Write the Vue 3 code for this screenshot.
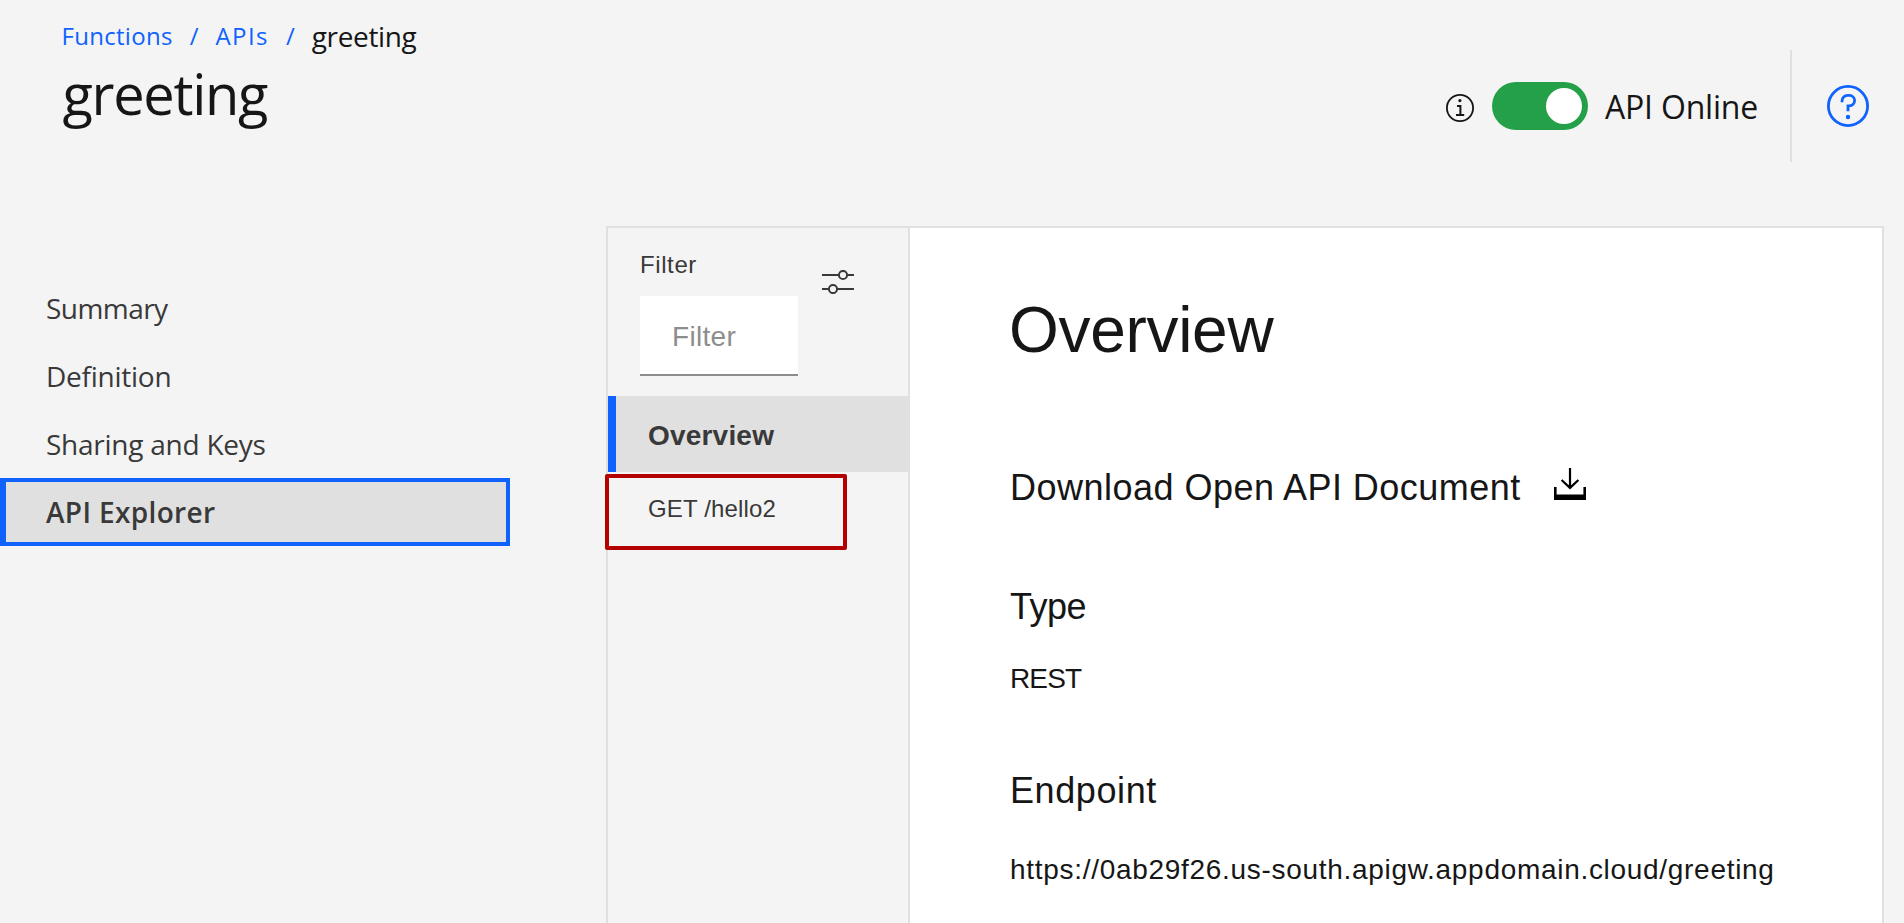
<script setup>
import { ref } from 'vue'

const online = ref(true)
const filter = ref('')
const navItems = [
  { label: 'Summary', cls: 'summary' },
  { label: 'Definition', cls: 'definition' },
  { label: 'Sharing and Keys', cls: 'sharing' },
  { label: 'API Explorer', cls: 'active' },
]
</script>

<template>
  <div class="page">
    <header class="header">
      <div class="heading">
        <nav class="crumbs">
          <a class="crumb">Functions</a>
          <span class="slash">/</span>
          <a class="crumb apis">APIs</a>
          <span class="slash">/</span>
          <span class="current">greeting</span>
        </nav>
        <h1 class="title">greeting</h1>
      </div>
      <div class="actions">
        <svg class="info" viewBox="0 0 28 28" fill="none">
          <circle cx="14" cy="14" r="13.1" stroke="#161616" stroke-width="1.8" />
          <circle cx="13.9" cy="6.6" r="1.6" fill="#161616" />
          <path d="M11 12h3.4v9M10 21.1h8.2" stroke="#161616" stroke-width="2" />
        </svg>
        <button class="toggle" :class="{ on: online }" @click="online = !online"><i class="knob"></i></button>
        <span class="status">API Online</span>
        <span class="divider"></span>
        <svg class="help" viewBox="0 0 42 42" fill="none" stroke="#0f62fe" stroke-width="2.8">
          <circle cx="21" cy="21" r="19.6" />
          <path d="M15 17.2V16.2A5.7 5.7 0 0 1 20.7 10.4H22.4A5.2 5.2 0 0 1 22.4 20.8H21V26.2" />
          <circle cx="21" cy="32" r="2.2" fill="#0f62fe" stroke="none" />
        </svg>
      </div>
    </header>

    <main class="main">
      <nav class="side">
        <a v-for="item in navItems" :key="item.label" class="side-item" :class="item.cls">{{ item.label }}</a>
      </nav>

      <section class="panel">
        <aside class="ops">
          <div class="filter-row">
            <label class="filter">
              <span class="filter-label">Filter</span>
              <input v-model="filter" class="filter-input" placeholder="Filter" />
            </label>
            <svg class="sliders" viewBox="0 0 32 24" fill="none" stroke="#393939" stroke-width="2">
              <path d="M0 5h16.5M25.5 5H32M0 19h6.5M15.5 19H32" />
              <circle cx="21" cy="5" r="4.1" />
              <circle cx="11" cy="19" r="4.1" />
            </svg>
          </div>
          <a class="op selected">Overview</a>
          <a class="op get">GET /hello2<span class="highlight"></span></a>
        </aside>
        <article class="content">
          <h2 class="overview">Overview</h2>
          <div class="download">
            <h3 class="sub">Download Open API Document</h3>
            <svg class="download-icon" viewBox="0 0 32 32" fill="none" stroke="#000">
              <path d="M16 0v20M7.6 12l8.4 7.9 8.4-7.9" stroke-width="2.2" />
              <path d="M0 19h2.6v7.5H29.4V19H32V32H0z" fill="#000" stroke="none" />
            </svg>
          </div>
          <h3 class="sub type">Type</h3>
          <p class="value rest">REST</p>
          <h3 class="sub endpoint">Endpoint</h3>
          <p class="value url">https://0ab29f26.us-south.apigw.appdomain.cloud/greeting</p>
        </article>
      </section>
    </main>
  </div>
</template>

<style>
body { background: #f4f4f4; }
</style>

<style scoped>
.page {
  box-sizing: border-box;
  width: 1904px;
  height: 923px;
  overflow: hidden;
  background: #f4f4f4;
  color: #161616;
  font-family: "Open Sans", sans-serif;
}
.page * { box-sizing: border-box; }
h1, h2, h3, p { margin: 0; font-weight: 400; white-space: nowrap; }

.header { display: flex; justify-content: space-between; height: 226px; }
.heading { padding: 16px 0 0 61.5px; }
.crumbs { display: flex; gap: 17px; height: 40px; font-size: 24px; line-height: 40px; color: #0f62fe; }
.crumb { letter-spacing: 0.3px; }
.apis { letter-spacing: 1.4px; }
.current { font-size: 28px; letter-spacing: -0.35px; color: #161616; }
.title { margin: 2px 0 0 1px; font-size: 56px; line-height: 70px; letter-spacing: -1.3px; }

.actions { display: flex; align-items: center; height: 112px; margin-top: 50px; padding-right: 35px; }
.info { width: 28px; height: 28px; margin: 4px 18px 0 0; }
.toggle { display: flex; align-items: center; width: 96px; height: 48px; padding: 0 6px; border: 0; border-radius: 24px; background: #8d8d8d; }
.toggle.on { justify-content: flex-end; background: #24a148; }
.knob { width: 36px; height: 36px; border-radius: 50%; background: #fff; }
.status { width: 185px; margin: 2px 0 0 17px; font-size: 32px; line-height: 40px; letter-spacing: -0.2px; white-space: nowrap; }
.divider { width: 2px; height: 112px; background: #e0e0e0; }
.help { width: 42px; height: 42px; margin-left: 35px; }

.main { display: flex; height: 697px; }
.side { width: 606px; padding-top: 48px; }
.side-item { display: block; width: 510px; height: 68px; padding-left: 46px; font-size: 28px; line-height: 68px; color: #393939; letter-spacing: -0.25px; }
.side-item.summary { letter-spacing: -0.55px; }
.side-item.active {
  padding-left: 40px;
  border: 4px solid #0f62fe;
  border-left-width: 6px;
  background: #e0e0e0;
  font-weight: 600;
  line-height: 61px;
  letter-spacing: 0.35px;
}

.panel { display: flex; width: 1278px; border: solid #e0e0e0; border-width: 2px 2px 0; font-family: "Liberation Sans", Arial, sans-serif; }
.ops { width: 302px; border-right: 2px solid #e0e0e0; color: #393939; }
.filter-row { display: flex; height: 168px; padding: 21px 0 0 32px; }
.filter { display: block; width: 158px; }
.filter-label { display: block; font-size: 24px; line-height: 32px; letter-spacing: 0.6px; }
.filter-input {
  display: block;
  width: 158px;
  height: 80px;
  margin-top: 15px;
  padding: 3px 0 0 32px;
  border: 0;
  border-bottom: 2px solid #8d8d8d;
  border-radius: 0;
  outline: 0;
  background: #fff;
  font: 28px "Liberation Sans", Arial, sans-serif;
  letter-spacing: 0.3px;
}
.filter-input::placeholder { color: #8d8d8d; opacity: 1; }
.sliders { width: 32px; height: 24px; margin: 21px 0 0 24px; }
.op { display: block; position: relative; padding-left: 40px; }
.op.selected { height: 76px; margin-bottom: 2px; padding-left: 32px; border-left: 8px solid #0f62fe; background: #e0e0e0; font-size: 28px; font-weight: 700; line-height: 80px; letter-spacing: 0.2px; }
.op.get { font-size: 24px; line-height: 70px; letter-spacing: 0.15px; }
.highlight { position: absolute; left: -3px; top: 0; width: 242px; height: 76px; border: 4px solid #b30000; border-radius: 2px; }

.content { flex: 1; padding: 62px 0 0 100px; background: #fff; }
.overview { margin-left: -1px; font-size: 64px; line-height: 80px; letter-spacing: -0.3px; }
.download { display: flex; margin-top: 94px; }
.sub { font-size: 36px; line-height: 48px; letter-spacing: 0.48px; }
.download-icon { width: 32px; height: 32px; margin: 4px 0 0 33px; }
.type { margin-top: 71px; letter-spacing: -0.5px; }
.value { font-size: 28px; line-height: 40px; }
.rest { margin-top: 28px; letter-spacing: -0.85px; }
.endpoint { margin-top: 68px; letter-spacing: 0.6px; }
.url { margin-top: 35px; letter-spacing: 0.7px; }
</style>
